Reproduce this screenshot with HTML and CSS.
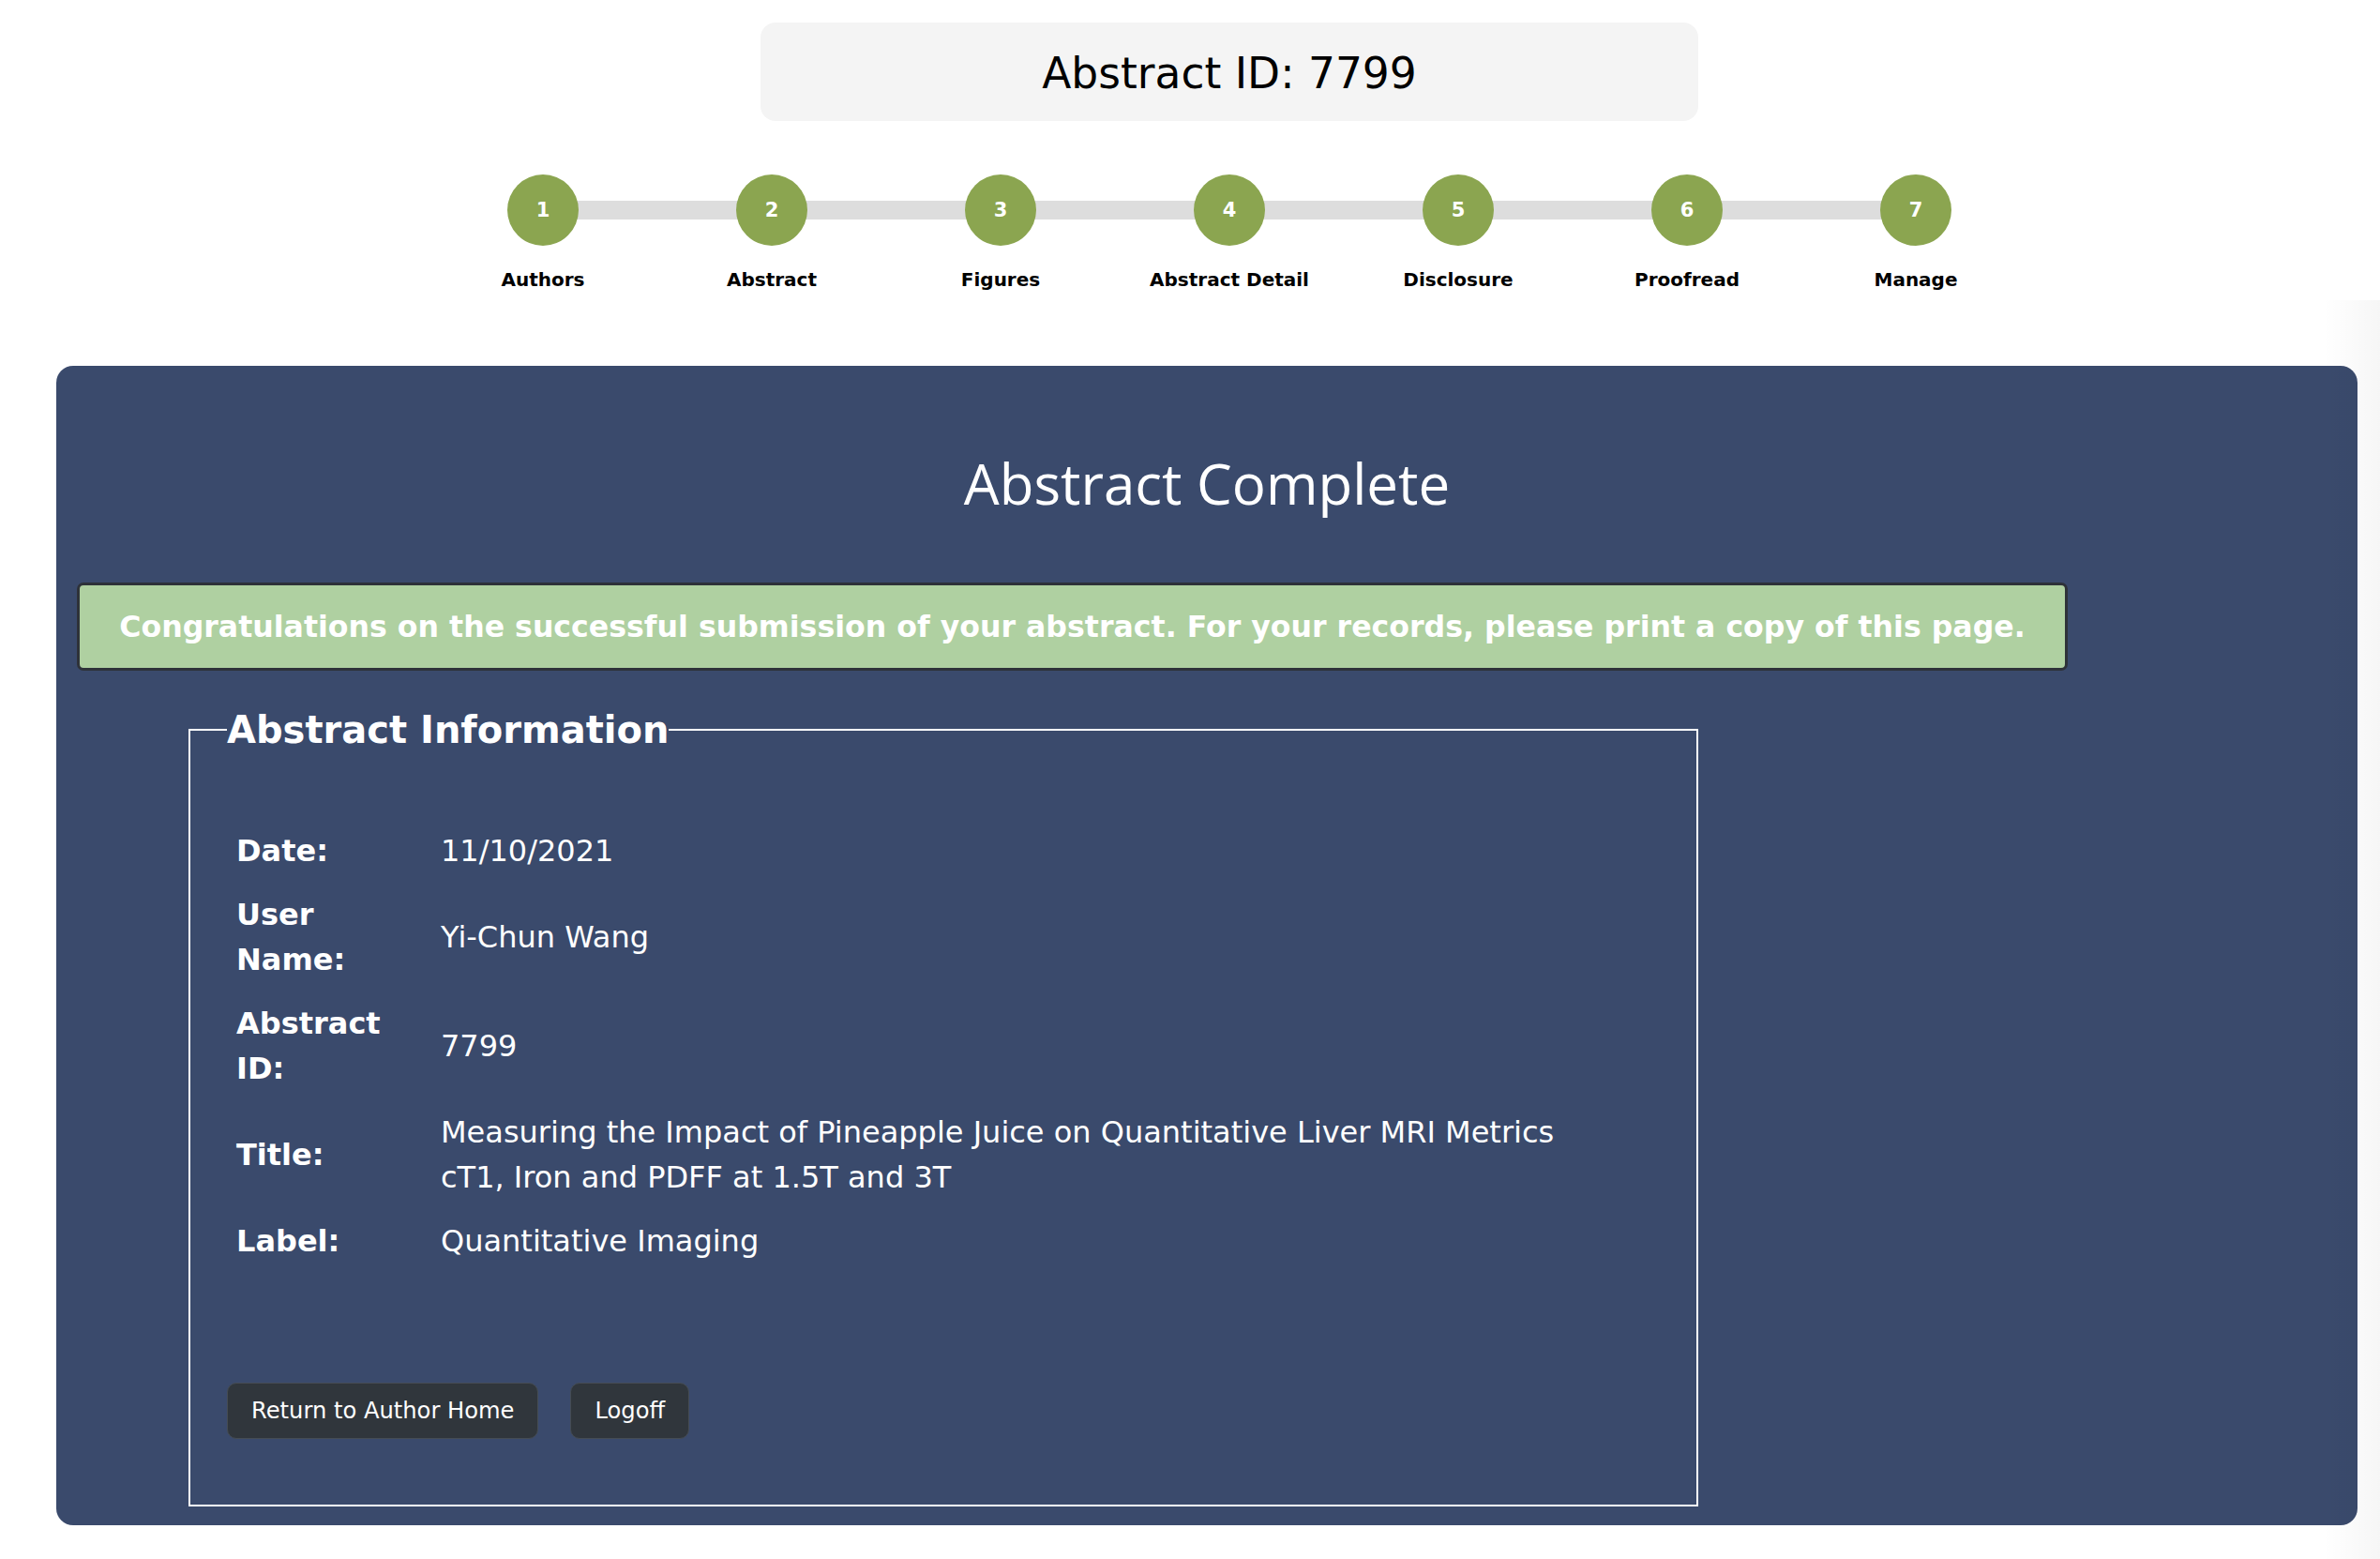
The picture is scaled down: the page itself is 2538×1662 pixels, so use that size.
FILE: index.html
```html
<!DOCTYPE html>
<html lang="en">
<head>
<meta charset="utf-8">
<title>Abstract Complete</title>
<link rel="stylesheet" href="styles.css">
</head>
<body>
<div class="top">
  <div class="id-box">Abstract ID: 7799</div>
  <ol class="steps">
    <li class="step"><span class="dot">1</span><span class="step-label">Authors</span></li>
    <li class="step"><span class="dot">2</span><span class="step-label">Abstract</span></li>
    <li class="step"><span class="dot">3</span><span class="step-label">Figures</span></li>
    <li class="step"><span class="dot">4</span><span class="step-label">Abstract Detail</span></li>
    <li class="step"><span class="dot">5</span><span class="step-label">Disclosure</span></li>
    <li class="step"><span class="dot">6</span><span class="step-label">Proofread</span></li>
    <li class="step"><span class="dot">7</span><span class="step-label">Manage</span></li>
  </ol>
</div>

<main class="panel">
  <h1 class="panel-title">Abstract Complete</h1>
  <div class="alert">Congratulations on the successful submission of your abstract. For your records, please print a copy of this page.</div>

  <fieldset class="info">
    <legend class="info-legend">Abstract Information</legend>
    <table class="info-table">
      <tr><th>Date:</th><td>11/10/2021</td></tr>
      <tr><th>User Name:</th><td>Yi-Chun Wang</td></tr>
      <tr><th>Abstract ID:</th><td>7799</td></tr>
      <tr><th>Title:</th><td>Measuring the Impact of Pineapple Juice on Quantitative Liver MRI Metrics cT1, Iron and PDFF at 1.5T and 3T</td></tr>
      <tr><th>Label:</th><td>Quantitative Imaging</td></tr>
    </table>
    <div class="actions">
      <button class="btn" type="button">Return to Author Home</button>
      <button class="btn" type="button">Logoff</button>
    </div>
  </fieldset>
</main>
<div class="edge-shade"></div>
</body>
</html>
```

FILE: styles.css
```css
html, body {
  margin: 0;
  padding: 0;
  background: #ffffff;
}

body {
  font-family: "DejaVu Sans", Verdana, sans-serif;
  color: #000000;
}

.top {
  padding: 24px 0 0 84px;
}

.id-box {
  width: 1000px;
  height: 105px;
  box-sizing: border-box;
  padding-top: 3px;
  margin: 0 auto;
  background: #f4f4f4;
  border-radius: 16px;
  display: flex;
  align-items: center;
  justify-content: center;
  font-size: 45.5px;
  color: #000;
}

.steps {
  list-style: none;
  margin: 57px auto 0;
  padding: 0;
  width: 1708px;
  display: flex;
}

.step {
  position: relative;
  width: 244px;
  display: flex;
  flex-direction: column;
  align-items: center;
}

.step:not(:last-child)::after {
  content: "";
  position: absolute;
  left: 50%;
  width: 100%;
  top: 28px;
  height: 20px;
  background: #dddddd;
  z-index: 0;
}

.dot {
  position: relative;
  z-index: 1;
  width: 76px;
  height: 76px;
  border-radius: 50%;
  background: #8ba550;
  color: #ffffff;
  font-weight: bold;
  font-size: 21px;
  display: flex;
  align-items: center;
  justify-content: center;
}

.step-label {
  margin-top: 24px;
  font-size: 20px;
  line-height: 24px;
  font-weight: bold;
  white-space: nowrap;
}

.panel {
  margin: 80px 24px 0 60px;
  padding: 20px 20px 20px 20px;
  background: #3a4a6c;
  border-radius: 18px;
  color: #ffffff;
}

.panel-title {
  margin: 64px 0 0;
  font-family: "Open Sans", sans-serif;
  font-weight: normal;
  font-size: 60px;
  line-height: 83px;
  text-align: center;
}

.alert {
  margin: 64px 0 0 2px;
  width: 2123px;
  box-sizing: border-box;
  border: 3px solid #2e3239;
  border-radius: 7px;
  background: #afd0a1;
  color: #ffffff;
  font-weight: bold;
  font-size: 31.6px;
  line-height: 36px;
  padding: 26px 10px;
  text-align: center;
  white-space: nowrap;
}

.info {
  margin: 40px 0 0 121px;
  width: 1610px;
  box-sizing: border-box;
  border: 2px solid #ffffff;
  padding: 72px 39px 70px 39px;
  min-inline-size: 0;
}

.info-legend {
  padding: 0;
  font-weight: bold;
  font-size: 40px;
}

.info-table {
  border-collapse: collapse;
  font-size: 32px;
  line-height: 48px;
}

.info-table th,
.info-table td {
  padding: 10px;
  vertical-align: middle;
  text-align: left;
}

.info-table th {
  width: 198px;
  font-weight: bold;
}

.info-table td {
  width: 1200px;
  font-weight: normal;
}

.actions {
  margin: 117px 0 0 0;
  display: flex;
  gap: 34px;
}

.btn {
  font-family: "DejaVu Sans", Verdana, sans-serif;
  font-size: 24.2px;
  line-height: 36px;
  padding: 11px 25px;
  border: 1px solid #454c54;
  border-radius: 10px;
  background: #30363c;
  color: #ffffff;
}

.edge-shade {
  position: absolute;
  top: 320px;
  right: 0;
  width: 60px;
  height: 1342px;
  background: linear-gradient(to right, rgba(0, 0, 0, 0), rgba(0, 0, 0, 0.035));
  pointer-events: none;
}
```
